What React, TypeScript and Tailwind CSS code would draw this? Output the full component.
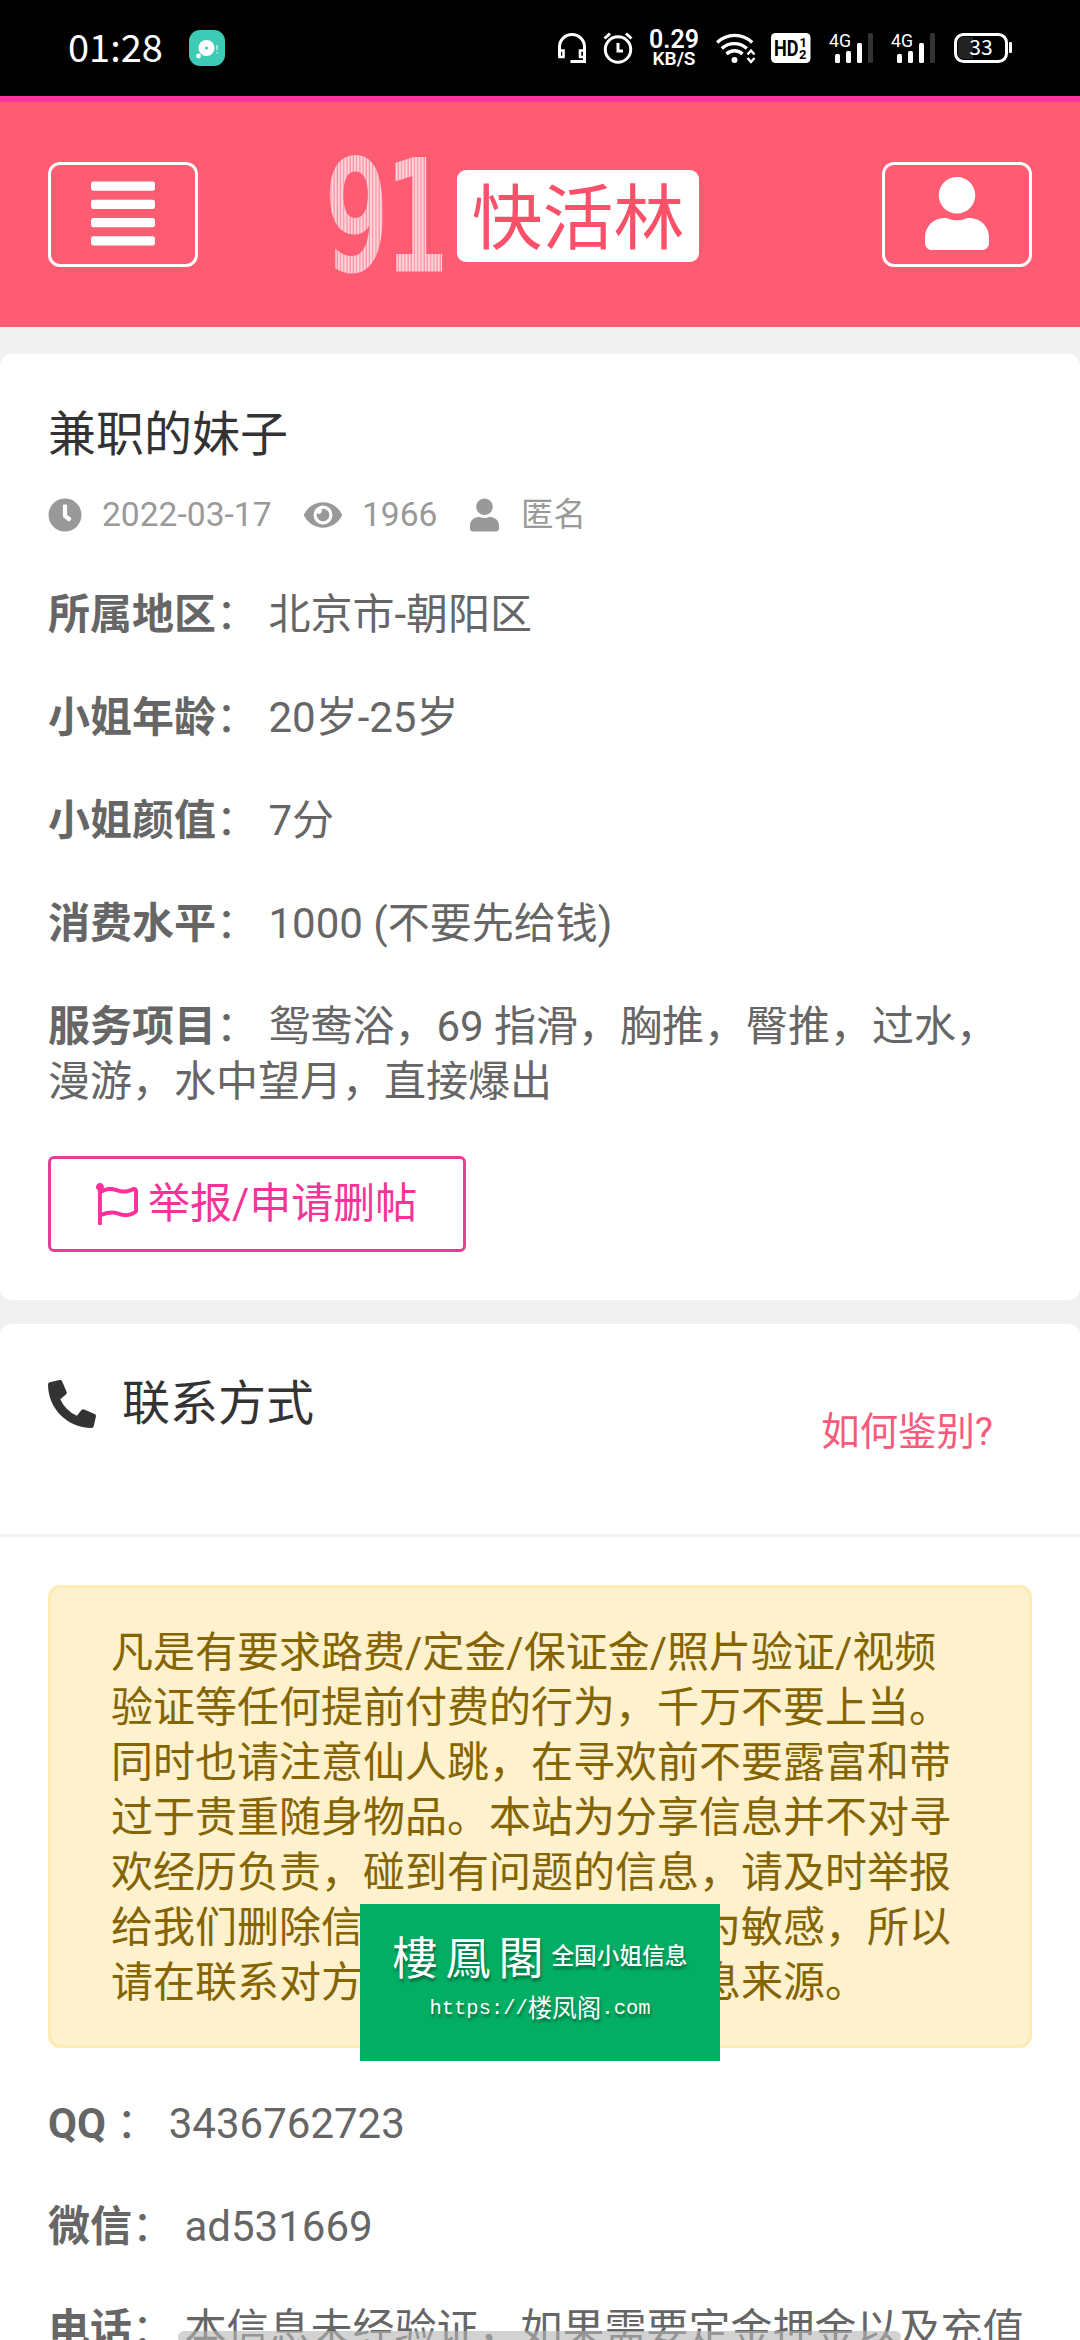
import { FaAlignJustify, FaClock, FaEye, FaPhoneAlt, FaRegFlag, FaUser } from "react-icons/fa";

const details = [
  { label: "所属地区", value: "北京市-朝阳区" },
  { label: "小姐年龄", value: "20岁-25岁" },
  { label: "小姐颜值", value: "7分" },
  { label: "消费水平", value: "1000 (不要先给钱)" },
  { label: "服务项目", value: "鸳鸯浴，69 指滑，胸推，臀推，过水，漫游，水中望月，直接爆出" },
];

const contacts = [
  { label: "QQ", value: "3436762723", spaced: true },
  { label: "微信", value: "ad531669" },
  { label: "电话", value: "本信息未经验证，如果需要定金押金以及充值" },
];

const notice = [
  "凡是有要求路费/定金/保证金/照片验证/视频",
  "验证等任何提前付费的行为，千万不要上当。",
  "同时也请注意仙人跳，在寻欢前不要露富和带",
  "过于贵重随身物品。本站为分享信息并不对寻",
  "欢经历负责，碰到有问题的信息，请及时举报",
  "给我们删除信息。因网站性质较为敏感，所以",
  "请在联系对方时不要透露本站信息来源。",
];

const Signal = () => (
  <svg className="h-[30px] w-[46px] overflow-visible" viewBox="0 0 46 30">
    <text x="0" y="14" fill="#fff" fontSize="18.500" textLength="22" lengthAdjust="spacingAndGlyphs" className="font-['Roboto',sans-serif]">
      4G
    </text>
    <rect x="6" y="21" width="5" height="9" rx="1.500" fill="#fff" />
    <rect x="17" y="18" width="5" height="12" rx="1.500" fill="#fff" />
    <rect x="28" y="10" width="5" height="20" rx="1.500" fill="#fff" />
    <rect x="39" y="0" width="5" height="30" rx="1.500" fill="#333" />
  </svg>
);

const StatusBar = () => (
  <div className="flex h-24 shrink-0 items-center bg-black text-white">
    <span className="ml-[68px] w-[121px] pb-1 font-['Noto_Sans_CJK_SC',sans-serif] text-[38px] leading-none">01:28</span>
    <svg className="h-9 w-9" viewBox="0 0 36 36">
      <rect width="36" height="36" rx="11" fill="#3ccbb5" />
      <circle cx="17.500" cy="18" r="8" fill="#fff" />
      <circle cx="17.500" cy="18" r="1.600" fill="#3ccbb5" />
      <circle cx="9.500" cy="26" r="2.400" fill="#fff" />
      <path d="M28 15v5M28 22v1.500" stroke="#b9ece4" strokeWidth="1.600" />
    </svg>

    <svg className="ml-[332px] h-[31px] w-[30px]" viewBox="0 0 30 31" fill="none" stroke="#fff" strokeWidth="3">
      <path d="M2.500 23V14a12.400 12.400 0 0 1 25 0v14.500H13.500" />
      <path d="M2.500 17.500h4v6.500h-4zM27.500 17.500h-4.500v6.500h4.500" strokeWidth="2.600" />
    </svg>
    <svg className="ml-4 h-8 w-[30px]" viewBox="0 0 30 32" fill="none" stroke="#fff" strokeWidth="3">
      <circle cx="15" cy="17.500" r="12.700" />
      <path d="M15 11v8h5M1.500 6.500L7 1.500M28.500 6.500L23 1.500" />
    </svg>
    <div className="ml-4 flex w-[50px] flex-col items-center font-['Roboto',sans-serif] font-semibold">
      <span className="text-[25px] leading-[20px]">0.29</span>
      <span className="text-[19px] leading-[17px]">KB/S</span>
    </div>
    <svg className="ml-[17px] h-[31px] w-[40px]" viewBox="0 0 40 31" fill="none" stroke="#fff" strokeWidth="3.400">
      <path d="M1.200 9.500a25 25 0 0 1 35 0M5.800 15.500a18.500 18.500 0 0 1 25 0M10.500 21a11.500 11.500 0 0 1 16 0" />
      <circle cx="18.500" cy="27" r="3" fill="#fff" stroke="none" />
      <path d="M31.500 21.500l3.500-4 3.500 4M31.500 25l3.500 4 3.500-4" strokeWidth="2.400" />
    </svg>
    <svg className="ml-[15px] h-[30px] w-[40px] overflow-visible font-['Roboto',sans-serif] font-bold" viewBox="0 0 40 30">
      <rect width="39.500" height="30" rx="4.500" fill="#fff" />
      <text x="3" y="23" fontSize="22" textLength="24.500" lengthAdjust="spacingAndGlyphs">HD</text>
      <text x="28.500" y="14" fontSize="13">1</text>
      <text x="28" y="25.500" fontSize="13">2</text>
    </svg>
    <div className="ml-[18px] flex gap-4">
      <Signal />
      <Signal />
    </div>
    <svg className="ml-[17px] h-[30px] w-[60px] overflow-visible" viewBox="0 0 60 30">
      <rect x="1.500" y="1.500" width="51" height="27" rx="8" fill="none" stroke="#fff" strokeWidth="3" />
      <path d="M19 4v22H9a5 5 0 0 1-5-5V9a5 5 0 0 1 5-5z" fill="#222" />
      <rect x="55" y="9" width="3" height="11" rx="1" fill="#fff" />
      <text x="27" y="22" fill="#fff" fontSize="21" textAnchor="middle" className="font-['Noto_Sans_CJK_SC',sans-serif]">33</text>
    </svg>
  </div>
);

const Logo = () => (
  <div className="flex items-center">
    <svg className="h-[120px] w-[127px] overflow-visible" viewBox="0 0 127 120">
      <defs>
        <pattern id="logo-lines" width="4.600" height="5" patternUnits="userSpaceOnUse">
          <rect width="5" height="5" fill="#fd8ea0" />
          <rect width="2.900" height="5" fill="#fed3da" />
        </pattern>
      </defs>
      <text
        x="0"
        y="0"
        transform="translate(-5 113) scale(.7 1)"
        fontSize="150"
        fill="url(#logo-lines)"
        stroke="url(#logo-lines)"
        strokeWidth="5"
        textLength="175"
        lengthAdjust="spacing"
        className="font-['DejaVu_Sans_Mono',monospace]"
      >
        91
      </text>
    </svg>
    <div className="flex h-[92px] w-[242px] items-center justify-center rounded-[9px] bg-white text-[71px] leading-none text-[#fb506a]">
      <span className="relative top-0.5">快活林</span>
    </div>
  </div>
);

const Header = () => (
  <header className="flex h-[231px] shrink-0 items-start justify-between border-t-[6px] border-[#fc359c] bg-[#fd5c73] px-12 text-white">
    <button className="mt-[60px] flex h-[105px] w-[150px] items-center justify-center rounded-xl border-[3px] border-white pb-[3px]">
      <FaAlignJustify className="h-[73px] w-16" />
    </button>
    <div className="mt-[54px] -ml-[51px]">
      <Logo />
    </div>
    <button className="mt-[60px] flex h-[105px] w-[150px] items-center justify-center rounded-xl border-[3px] border-white pb-[3px]">
      <FaUser className="h-[73px] w-16" />
    </button>
  </header>
);

const Row = ({ label, value, spaced }: { label: string; value: string; spaced?: boolean }) => (
  <p className="mb-12">
    <span className="font-bold">{label}</span>
    {spaced ? " " : ""}： {value}
  </p>
);

const PostCard = () => (
  <section className="mt-[27px] h-[946px] shrink-0 rounded-xl bg-white px-12 pt-[53px]">
    <h1 className="text-[48px] leading-[55px] text-[#333]">兼职的妹子</h1>
    <div className="mt-[27px] flex h-[52px] items-center text-[33.600px] leading-[52px] text-[#999]">
      <FaClock className="h-[34px] w-[34px]" />
      <span className="ml-5 w-[202px]">2022-03-17</span>
      <FaEye className="h-[34px] w-[38px]" />
      <span className="ml-5 w-[108px]">1966</span>
      <FaUser className="h-[34px] w-[29px]" />
      <span className="ml-[22px] text-[32.500px]">匿名</span>
    </div>
    <div className="mt-[46px] w-[960px] text-[42px] leading-[55px] text-[#666]">
      {details.map((d) => (
        <Row key={d.label} {...d} />
      ))}
    </div>
    <button className="-mt-px flex h-24 w-[418px] items-center rounded-md border-[3px] border-[#e83e98] pl-[45px] text-[42px] leading-none text-[#f5349a]">
      <FaRegFlag className="h-[42px] w-[42px] text-[#ff2f9c]" />
      <span className="ml-2.5">举报/申请删帖</span>
    </button>
  </section>
);

const ContactCard = () => (
  <section className="mt-6 shrink-0 rounded-t-xl bg-white">
    <div className="flex h-[213px] items-start justify-between border-b-[3px] border-[#f1f1f1] pr-[87px] pl-12">
      <h2 className="mt-[52px] flex items-center text-[48px] leading-[55px] text-[#333]">
        <FaPhoneAlt className="h-12 w-12" />
        <span className="ml-[26px]">联系方式</span>
      </h2>
      <a className="mt-[80px] text-[38.400px] leading-[55px] text-[#f75a7a]">如何鉴别?</a>
    </div>
    <div className="px-12 pt-12">
      <div className="h-[463px] rounded-xl border-[3px] border-[#ffecb5] bg-[#fef1cd] pt-[37px] pl-[60px] text-[42px] leading-[55px] whitespace-nowrap text-[#856404]">
        {notice.map((line) => (
          <p key={line}>{line}</p>
        ))}
      </div>
      <div className="mt-12 text-[42px] leading-[55px] whitespace-nowrap text-[#666]">
        {contacts.map((c) => (
          <Row key={c.label} {...c} />
        ))}
      </div>
    </div>
  </section>
);

const Watermark = () => (
  <div className="absolute top-[1904px] left-[360px] flex h-[157px] w-[360px] flex-col items-center bg-[#02ae63] pt-[31px] text-white [text-shadow:1px_3px_3px_rgba(0,0,0,0.4)]">
    <div className="flex h-[44px] items-center whitespace-nowrap">
      <span className="relative -top-0.5 font-['Noto_Sans_CJK_TC',sans-serif] text-[45px] leading-none tracking-[8px]">樓鳳閣</span>
      <span className="text-[22.700px] leading-none font-medium">全国小姐信息</span>
    </div>
    <div className="mt-[16px] flex items-center text-[24.500px] leading-[28px]">
      <span className="font-['Liberation_Mono',monospace] text-[20.500px]">https://</span>
      <span>楼凤阁</span>
      <span className="font-['Liberation_Mono',monospace] text-[20.500px]">.com</span>
    </div>
  </div>
);

export default function App() {
  return (
    <div className="relative flex h-[2340px] w-[1080px] flex-col overflow-hidden bg-[#f1f1f1] font-['Roboto','Noto_Sans_CJK_SC',sans-serif]">
      <StatusBar />
      <Header />
      <PostCard />
      <ContactCard />
      <Watermark />
      {/* gesture bar */}
      <div className="absolute top-[2331px] left-[178px] h-3 w-[723px] rounded-full bg-[#b4b4b4]/60" />
    </div>
  );
}
